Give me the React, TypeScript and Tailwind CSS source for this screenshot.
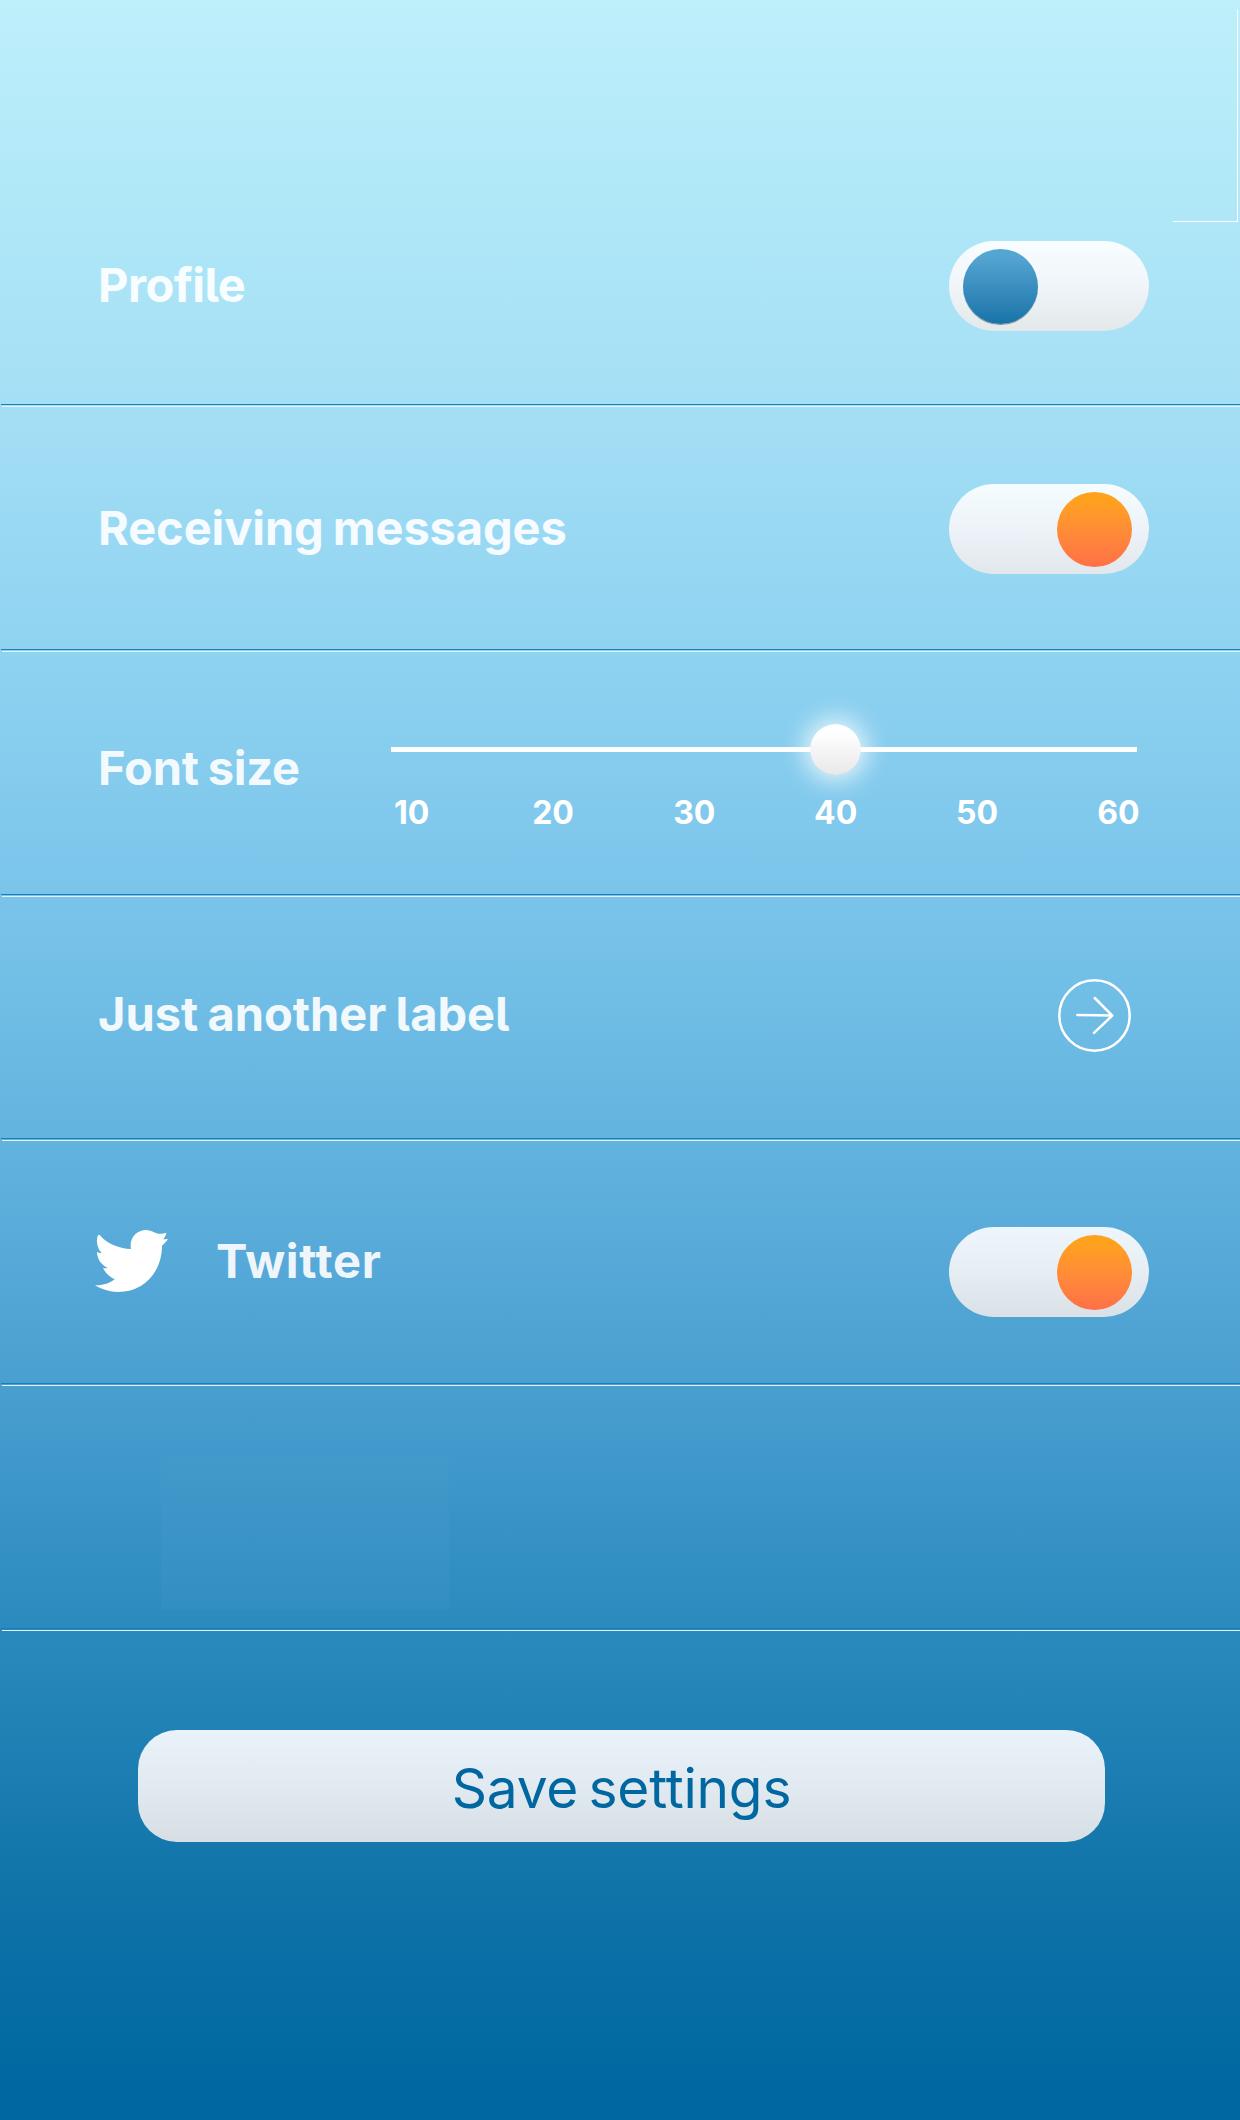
import type { ReactNode } from "react";

type Tone = "bright" | "mid" | "soft";

const trackTone: Record<Tone, string> = {
  bright: "from-[#f8feff] via-[#eff5f9] to-[#e3e8ea]",
  mid: "from-[#f5fdff] via-[#edf3f8] to-[#e2e7ec]",
  soft: "from-[#eef6fb] via-[#e6eef3] to-[#d9e1e7]",
};

function Toggle({ on = false, tone }: { on?: boolean; tone: Tone }) {
  return (
    <div
      className={`ml-auto flex h-[90px] w-[200px] shrink-0 items-start rounded-[45px] bg-linear-to-b px-[14px] pt-2 ${trackTone[tone]}`}
    >
      <div
        className={`size-[75px] rounded-full bg-linear-to-b ${
          on
            ? "ml-[94px] from-[#ffa21b] from-10% to-[#ff7047]"
            : "from-[#54a5d2] from-10% to-[#1573a8] shadow-[0_1px_0_rgba(90,110,120,0.7)]"
        }`}
      />
    </div>
  );
}

function Divider() {
  return (
    <div className="flex h-[3px] shrink-0 flex-col justify-between pl-px">
      <div className="h-px bg-[#1b7fb6]" />
      <div className="ml-px h-px bg-[#e0f2fa]" />
    </div>
  );
}

function Row({ className, children }: { className: string; children?: ReactNode }) {
  return (
    <>
      <div className={`flex shrink-0 items-start pr-[91px] ${className}`}>{children}</div>
      <Divider />
    </>
  );
}

function Label({ className, children }: { className: string; children: ReactNode }) {
  return (
    <div
      className={`text-[47px] leading-none font-[680] whitespace-nowrap [font-feature-settings:'cv05'] [word-spacing:-2px] ${className}`}
    >
      {children}
    </div>
  );
}

function Slider() {
  return (
    <div className="w-[746px] shrink-0">
      <div className="relative flex h-[51px] w-[746px] items-center">
        <div className="h-[5px] w-full bg-white" />
        <div className="absolute top-0 left-[419px] size-[51px] rounded-full bg-linear-to-b from-white from-15% to-[#e8e8e8] shadow-[0_0_24px_6px_rgba(255,255,255,0.8)]" />
      </div>
      <div className="mt-[22px] -ml-[50px] flex w-[848px] text-[32px] leading-none font-bold text-white">
        {[10, 20, 30, 40, 50, 60].map((n) => (
          <span key={n} className="w-[141.33px] text-center">
            {n}
          </span>
        ))}
      </div>
    </div>
  );
}

function ArrowCircle() {
  return (
    <svg
      className="mr-[18px] ml-auto size-[73px] shrink-0"
      viewBox="0 0 73 73"
      fill="none"
      stroke="white"
      strokeWidth="2.5"
      strokeLinecap="round"
      strokeLinejoin="round"
    >
      <circle cx="36.5" cy="36.5" r="35.2" />
      <path d="M19.3 36.1 L54 36.6 M36.8 19 L54.3 36.6 L36 53.8" />
    </svg>
  );
}

function Bird() {
  return (
    <svg className="h-[62px] w-[73px] shrink-0" viewBox="105 90 219 186" fill="white">
      <path d="M119 105 C140 130 175 146 213 147 C212 143 212 140 212 135 C212 110 233 90 258 90 C272 90 283 98 294 101 C303 102 311 100 319 98 C318 106 314 112 309 118 C315 118 320 117 324 117 C319 125 312 131 306 137 C306 212 255 276 174 276 C148 276 125 268 105 256 C128 257 150 250 164 238 C150 232 135 218 129 203 C134 205 138 205 143 204 C125 195 111 178 111 155 C116 158 120 159 125 159 C111 145 108 122 113 108 Q116 103 119 105Z" />
    </svg>
  );
}

export default function App() {
  return (
    <div className="relative flex h-[2120px] w-[1240px] flex-col overflow-hidden bg-[linear-gradient(to_bottom,#beeffb_0px,#b0e8f8_200px,#a5dff5_400px,#8fd3f1_650px,#7ac4ea_895px,#6fbde5_1010px,#63b3df_1140px,#499fd0_1383px,#2b8abd_1630px,#2182b6_1720px,#1477ab_1850px,#096ea5_1970px,#0067a0_2090px)] font-['Inter',sans-serif]">
      <div className="absolute top-[9px] right-[2px] h-[213px] w-px bg-white" />
      <div className="absolute top-[221px] right-[2px] h-px w-[65px] bg-white" />

      <Row className="h-[404px] pt-[241px] pl-[98px]">
        <Label className="mt-[20px] tracking-[-0.5px] text-[#f8fdff]">Profile</Label>
        <Toggle tone="bright" />
      </Row>
      <Row className="h-[242px] pt-[77px] pl-[98px]">
        <Label className="mt-[20px] tracking-[-0.1px] text-[#f6fbff]">Receiving messages</Label>
        <Toggle on tone="mid" />
      </Row>
      <Row className="h-[242px] pt-[72px] pl-[98px]">
        <Label className="mt-[20px] tracking-[-0.2px] text-[#f3fafe]">Font size</Label>
        <div className="mr-[12px] ml-auto">
          <Slider />
        </div>
      </Row>
      <Row className="h-[241px] pt-[82px] pl-[98px]">
        <Label className="mt-[11px] text-[#f1f9fd]">Just another label</Label>
        <ArrowCircle />
      </Row>
      <Row className="h-[242px] pt-[86px] pl-[95px]">
        <div className="mt-[3px]">
          <Bird />
        </div>
        <Label className="mt-[10px] ml-[48px] tracking-[0.7px] text-[#eef6fb]">Twitter</Label>
        <Toggle on tone="soft" />
      </Row>
      <Row className="h-[242px] pt-[72px] pl-[161px]">
        <div className="h-[151px] w-[288px] bg-linear-to-b from-[#8fb8e0]/3 to-[#8fb8e0]/6" />
      </Row>

      <button
        type="button"
        className="mt-[99px] ml-[138px] flex h-[112px] w-[967px] shrink-0 items-start justify-center rounded-[39px] bg-linear-to-b from-[#ebf3fa] via-[#e1eaf0] to-[#d7dfe5] pt-[31px] text-[55px] leading-none tracking-[-0.2px] text-[#0067a0] [word-spacing:-5px]"
      >
        Save settings
      </button>
    </div>
  );
}
